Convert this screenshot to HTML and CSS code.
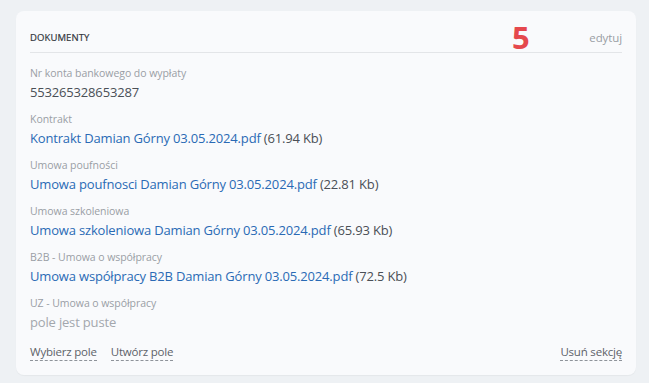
FILE: index.html
```html
<!DOCTYPE html>
<html lang="pl">
<head>
    <meta charset="UTF-8">
    <meta name="viewport" content="width=device-width, initial-scale=1.0">
    <title>Dokumenty</title>
    <link rel="stylesheet" href="styles.css">
</head>
<body>
    <div class="card">
        <div class="card-header">
            <span class="card-title">Dokumenty</span>
            <span class="badge">5</span>
            <a class="edit" href="#">edytuj</a>
        </div>
        <div class="fields">
            <div class="field">
                <div class="label">Nr konta bankowego do wypłaty</div>
                <div class="value">553265328653287</div>
            </div>
            <div class="field">
                <div class="label">Kontrakt</div>
                <div class="value"><a class="file" href="#">Kontrakt Damian Górny 03.05.2024.pdf</a> (61.94 Kb)</div>
            </div>
            <div class="field">
                <div class="label">Umowa poufności</div>
                <div class="value"><a class="file" href="#">Umowa poufnosci Damian Górny 03.05.2024.pdf</a> (22.81 Kb)</div>
            </div>
            <div class="field">
                <div class="label">Umowa szkoleniowa</div>
                <div class="value"><a class="file" href="#">Umowa szkoleniowa Damian Górny 03.05.2024.pdf</a> (65.93 Kb)</div>
            </div>
            <div class="field">
                <div class="label">B2B - Umowa o współpracy</div>
                <div class="value"><a class="file" href="#">Umowa współpracy B2B Damian Górny 03.05.2024.pdf</a> (72.5 Kb)</div>
            </div>
            <div class="field">
                <div class="label">UZ - Umowa o współpracy</div>
                <div class="value empty">pole jest puste</div>
            </div>
        </div>
        <div class="card-footer">
            <a class="action" href="#">Wybierz pole</a>
            <a class="action" href="#">Utwórz pole</a>
            <a class="action right" href="#">Usuń sekcję</a>
        </div>
    </div>
</body>
</html>
```

FILE: styles.css
```css
body {
    margin: 0;
    padding: 11px 13px 10px 16px;
    background-color: #eef1f4;
    font-family: "Open Sans", "Noto Sans", Arial, sans-serif;
    color: #3a3f45;
}
a {
    text-decoration: none;
}
.card {
    background: #f9fafc;
    border-radius: 8px;
    padding: 12px 14px 14px 14px;
    box-shadow: 0 1px 1px rgba(0, 0, 0, 0.04);
}
.card-header {
    position: relative;
    display: flex;
    align-items: center;
    justify-content: space-between;
    height: 28px;
    padding-bottom: 1px;
    border-bottom: 1px solid #e3e5e8;
}
.card-title {
    font-size: 9.5px;
    font-weight: 400;
    text-transform: uppercase;
    color: #33373c;
    letter-spacing: 0.1px;
    -webkit-text-stroke: 0.2px #33373c;
}
.badge {
    position: absolute;
    left: 482px;
    top: -4px;
    font-size: 31px;
    font-weight: 700;
    line-height: 36px;
    color: #e5484d;
}
.edit {
    font-size: 11.5px;
    color: #9a9ea4;
    letter-spacing: -0.1px;
}
.fields {
    display: flex;
    flex-direction: column;
    gap: 8px;
    padding-top: 12px;
}
.label {
    font-size: 10.5px;
    line-height: 17px;
    color: #9a9ea5;
    letter-spacing: -0.05px;
}
.value {
    font-size: 13px;
    line-height: 21px;
    color: #4a4f56;
    letter-spacing: -0.17px;
}
.value.empty {
    color: #a3a7ad;
}
.file {
    color: #2a6ab5;
}
.card-footer {
    display: flex;
    gap: 14px;
    padding-top: 11px;
}
.action {
    font-size: 11.5px;
    line-height: 16px;
    color: #5d6269;
    letter-spacing: -0.2px;
    border-bottom: 1px dashed #8e939a;
}
.action.right {
    margin-left: auto;
}
```
